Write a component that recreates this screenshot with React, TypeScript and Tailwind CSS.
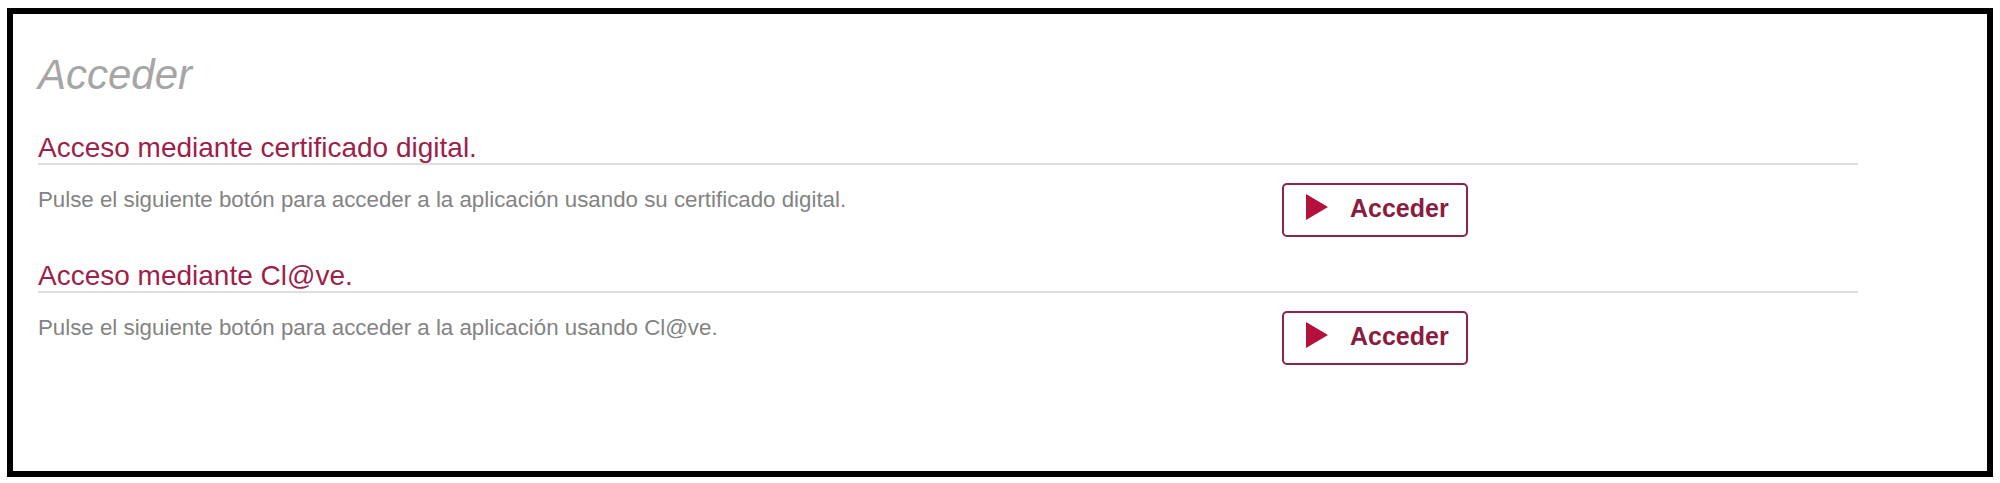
import React from 'react';

// Bloque de acceso (certificado / Cl@ve)
const AccessSection: React.FC<{ title: string; text: string; className?: string }> = ({ title, text, className }) => {
  return (
    <div className={className}>
      <h2 className="text-[28px] leading-[28px] text-[#9e1f4a] pb-[1px] border-b-2 border-[#dedede]">
        {title}
      </h2>
      <div className="flex items-start pt-[18px]">
        <p className="mt-[6px] w-[1244px] shrink-0 text-[22.3px] leading-[22px] text-[#838383]">{text}</p>
        <button
          type="button"
          className="w-[186px] h-[54px] flex items-center pl-[22px] border-2 border-[#8e2443] rounded-[5px] bg-white"
        >
          <svg width="22" height="26" viewBox="0 0 22 26" className="shrink-0 -mt-[6px]">
            <polygon points="0,0 22,13 0,26" fill="#b5103c" />
          </svg>
          <span className="ml-[22px] text-[25px] leading-[25px] font-bold text-[#8a1d3f] -mt-[3px]">Acceder</span>
        </button>
      </div>
    </div>
  );
};

export default function App() {
  return (
    <div className="w-[2000px] h-[483px] bg-white pt-[8px] font-['Liberation_Sans',Arial,sans-serif]">
      <div className="ml-[7px] w-[1986px] h-[469px] border-[6px] border-black pl-[25px] pr-[129px] pt-[40px]">
        <h1 className="text-[42px] leading-[42px] italic text-[#a6a6a6]">Acceder</h1>

        <AccessSection
          className="mt-[38px]"
          title="Acceso mediante certificado digital."
          text="Pulse el siguiente botón para acceder a la aplicación usando su certificado digital."
        />

        <AccessSection
          className="mt-[25px]"
          title="Acceso mediante Cl@ve."
          text="Pulse el siguiente botón para acceder a la aplicación usando Cl@ve."
        />
      </div>
    </div>
  );
}
